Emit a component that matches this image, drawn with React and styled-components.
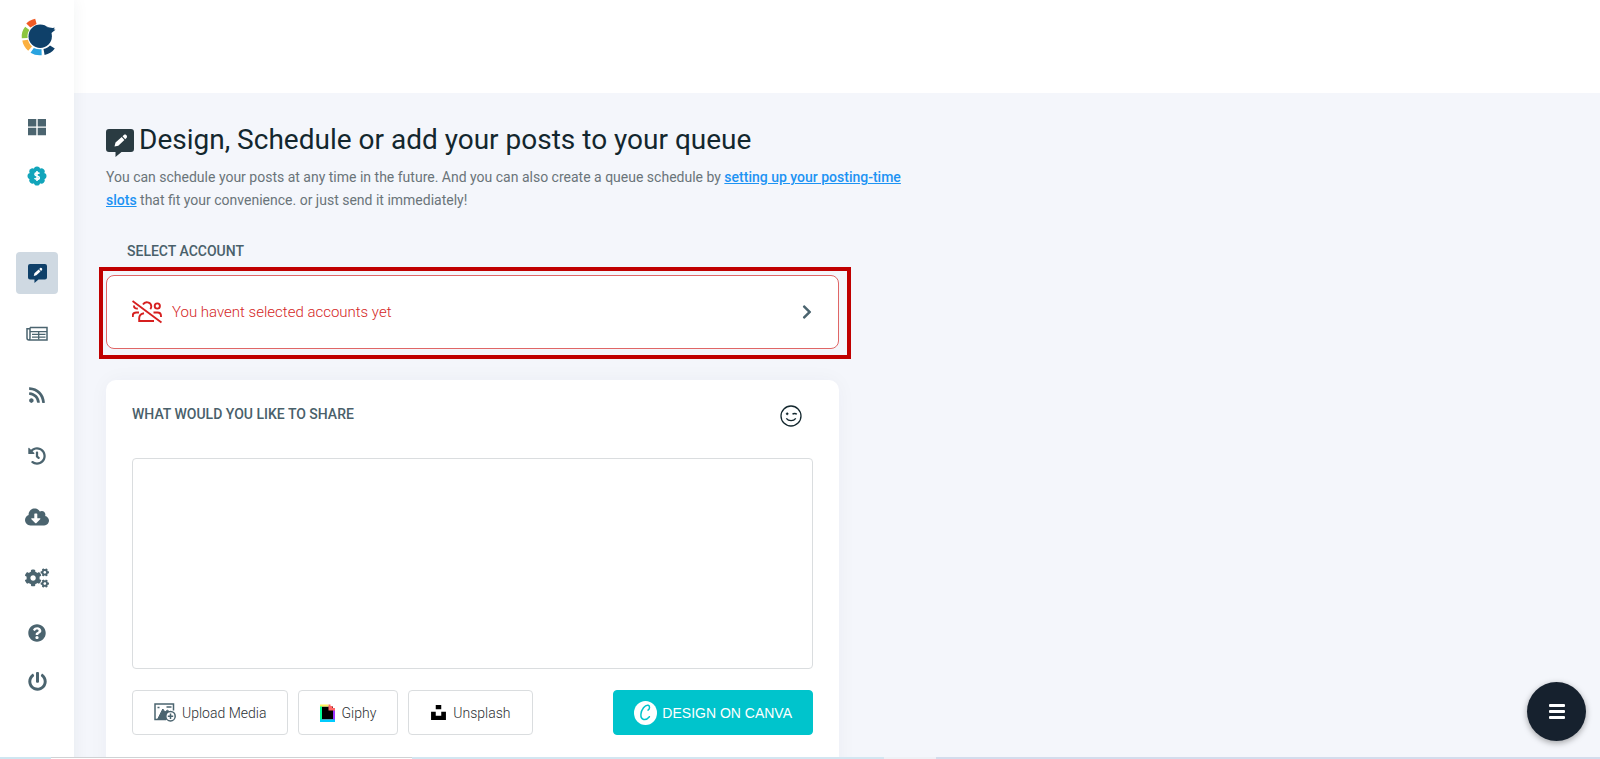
import React from "react";
import styled, { createGlobalStyle, css } from "styled-components";
import {
  FaRss,
  FaHistory,
  FaCloudDownloadAlt,
  FaQuestionCircle,
  FaPowerOff,
  FaUnsplash,
  FaChevronRight,
  FaCogs,
} from "react-icons/fa";

const colors = {
  page: "#f4f6fb",
  icon: "#4b646f",
  navy: "#0f4069",
  heading: "#13272e",
  muted: "#6a7479",
  label: "#49606a",
  link: "#1d93f3",
  red: "#d41f1f",
  frame: "#c00000",
  line: "#dadddf",
  teal: "#00c4cc",
};

const GlobalStyle = createGlobalStyle`
  * {
    box-sizing: border-box;
  }

  body {
    margin: 0;
    background: ${colors.page};
    font-family: Roboto, "Liberation Sans", sans-serif;
    overflow: hidden;
  }

  button,
  textarea {
    font-family: inherit;
    margin: 0;
  }
`;

const Layout = styled.div`
  display: grid;
  grid-template-columns: 74px 1fr;
  height: 100vh;
  overflow: hidden;
`;

const Sidebar = styled.aside`
  display: flex;
  flex-direction: column;
  align-items: center;
  padding-top: 18px;
  background: #fff;
  box-shadow: 0 0 16px rgba(30, 50, 70, 0.06);
  z-index: 1;
`;

const NavGroup = styled.nav`
  display: flex;
  flex-direction: column;
  align-items: center;
  gap: ${(props) => props.$gap}px;
  margin-top: ${(props) => props.$top}px;
`;

const NavLink = styled.a`
  display: flex;
  align-items: center;
  justify-content: center;
  width: 42px;
  height: 42px;
  border-radius: 4px;
  color: ${colors.icon};

  ${(props) =>
    props.$active &&
    css`
      background: #cfd9e2;
      color: ${colors.navy};
    `}
`;

const Main = styled.main`
  min-width: 0;
`;

const TopBar = styled.header`
  height: 93px;
  background: #fff;
`;

const Content = styled.div`
  max-width: 842px;
  padding: 30px 0 0 32px;
`;

const Title = styled.h1`
  display: flex;
  align-items: center;
  gap: 5px;
  margin: 0;
  color: ${colors.heading};
  font-size: 28px;
  font-weight: 400;
  line-height: 34px;

  svg {
    flex: none;
    margin-top: 5px;
    color: #2a3b42;
  }
`;

const Intro = styled.p`
  margin: 9px 0 0;
  color: ${colors.muted};
  font-size: 14px;
  line-height: 23px;

  a {
    color: ${colors.link};
    font-weight: 500;
  }
`;

const Form = styled.form`
  max-width: 733px;
`;

const Label = styled.label`
  display: block;
  color: ${colors.label};
  font-size: 14px;
  font-weight: 500;
  line-height: 20px;
  text-transform: uppercase;
`;

const AccountField = styled.div`
  padding-top: 29px;

  ${Label} {
    padding-left: 21px;
  }
`;

const Highlight = styled.div`
  margin: 6px -12px 0 -7px;
  padding: 4px 8px 6px 3px;
  border: 4px solid ${colors.frame};
`;

const AccountButton = styled.button`
  display: flex;
  align-items: center;
  width: 100%;
  height: 74px;
  padding: 0 23px 0 25px;
  border: 1px solid #e06666;
  border-radius: 8px;
  background: #fff;
  color: ${colors.red};
  font-size: 15px;
  font-weight: 300;
  text-align: left;

  span {
    flex: 1;
    padding-left: 10px;
  }
`;

const Card = styled.section`
  margin-top: 21px;
  padding: 24px 26px;
  border-radius: 10px;
  background: #fff;
  box-shadow: 0 0 20px rgba(30, 50, 70, 0.04);
`;

const CardHead = styled.div`
  display: flex;
  justify-content: space-between;
  height: 54px;
  padding-right: 11px;
`;

const EmojiButton = styled.button`
  width: 22px;
  height: 26px;
  padding: 0;
  border: 0;
  background: none;
  color: #13272e;
`;

const PostInput = styled.textarea`
  display: block;
  width: 100%;
  height: 211px;
  padding: 12px;
  border: 1px solid ${colors.line};
  border-radius: 4px;
  resize: none;
`;

const Actions = styled.div`
  display: flex;
  gap: 10px;
  padding: 21px 0 60px;
`;

const MediaButton = styled.button`
  display: flex;
  align-items: center;
  justify-content: center;
  gap: 6px;
  height: 45px;
  padding: 0 21px;
  border: 1px solid ${colors.line};
  border-radius: 4px;
  background: #fff;
  color: #2b2f33;
  font-size: 14px;
  font-weight: 300;
  white-space: nowrap;
`;

const CanvaButton = styled(MediaButton)`
  gap: 5px;
  margin-left: auto;
  padding: 0 20px;
  border-color: ${colors.teal};
  background: ${colors.teal};
  color: #fff;
  font-family: "Liberation Sans", Arial, sans-serif;
`;

const MenuButton = styled.button`
  position: fixed;
  right: 14px;
  bottom: 18px;
  display: flex;
  align-items: center;
  justify-content: center;
  width: 59px;
  height: 59px;
  padding: 0;
  border: 0;
  border-radius: 50%;
  background: #16212e;
  color: #fff;
  box-shadow: 0 2px 6px rgba(0, 0, 0, 0.35);
`;

const BottomEdge = styled.div`
  position: fixed;
  right: 0;
  bottom: 0;
  left: 0;
  display: flex;
  height: 2px;
  z-index: 2;
`;

const EdgePart = styled.span`
  flex: ${(props) => props.$size};
  border-top: 1px solid ${(props) => props.$color};
  background: ${(props) => props.$fill || props.$color};
`;

function Logo() {
  return (
    <svg width="40" height="38" viewBox="-4 0 40 38" role="img" aria-label="Home">
      <circle cx="19.200" cy="18.300" r="11.700" fill="#0f4069" />
      <path d="M26 8.500c2.200 1.300 4.700 1.700 8 1.300l-1.400 1.400 1.900.6-4.700 3.700z" fill="#0f4069" />
      <path d="M14.200.7 15.600 5.900 9.400 9.400 5.300 5.400C7.700 2.900 10.700 1.300 14.200.7z" fill="#f15a24" />
      <path d="M4.200 8.800 8.400 12C6.800 14.400 6.200 17 6.600 20L.8 20.200C.3 15.900 1.500 12.100 4.200 8.800z" fill="#8cc63f" />
      <path d="M1.300 22.600 7 21.700C7.700 24.500 9 26.600 11 28.400L7.200 32.700C3.900 30 2 26.600 1.300 22.600z" fill="#fbb040" />
      <path d="M12.800 29.900C15.300 31.100 17.800 31.500 20.500 31.200L20.700 37.200C16.600 37.600 13 36.900 9.500 34.800z" fill="#29a3e0" />
      <path d="M22.500 31C25.200 30.400 27.200 29.300 29 27.500L33.800 30.500C31.100 34 27.900 36.200 23.600 36.900z" fill="#0f4069" />
    </svg>
  );
}

function GridIcon() {
  return (
    <svg width="20" height="18" viewBox="0 0 20 18" fill="currentColor">
      <path d="M1 1h8.300v7.500H1zM10.700 1H19v7.500h-8.300zM1 9.800h8.300v7.500H1zM10.700 9.800H19v7.500h-8.300z" />
    </svg>
  );
}

function DollarBadge() {
  const petals = [0, 45, 90, 135, 180, 225, 270, 315];
  return (
    <svg width="20" height="20" viewBox="0 0 20 20">
      <g fill="#12a5bb">
        <circle cx="10" cy="10" r="7.800" />
        {petals.map((angle) => (
          <circle key={angle} cx="10" cy="3.600" r="3.100" transform={`rotate(${angle} 10 10)`} />
        ))}
      </g>
      <path
        d="M12.400 7.700C11.900 6.700 8 6.300 7.900 8.300c0 2 4.400 1.200 4.400 3.400 0 2-4 1.900-4.700.5M10 5v10"
        fill="none"
        stroke="#fff"
        strokeWidth="1.600"
      />
    </svg>
  );
}

function PostIcon({ size }) {
  return (
    <svg width={size} height={size} viewBox="0 0 28 28">
      <path d="M3 0h22a3 3 0 0 1 3 3v17a3 3 0 0 1-3 3H15.500L9.500 28v-5H3a3 3 0 0 1-3-3V3a3 3 0 0 1 3-3z" fill="currentColor" />
      <path d="M8.500 17.500 9.500 13.500 15.700 8 18.400 11 12.300 16.700zM16.500 7.300l1.600-1.500c1.600-1 3.800 1.300 2.600 2.900l-1.500 1.500z" fill="#fff" />
    </svg>
  );
}

function ArticlesIcon() {
  return (
    <svg width="22" height="16" viewBox="0 0 22 16" fill="none" stroke="currentColor" strokeWidth="1.500">
      <path d="M4 1.500h17v12.500H3c-1.300 0-2-.7-2-2V2.800h3M4 1.500V12c0 1.200-.4 2-1.200 2" />
      <path d="M4 5.700h17M6 8.300h13.500M6 11.200h13.500M12.700 6v7.500" strokeWidth="1.300" />
    </svg>
  );
}

function NoUsersIcon() {
  return (
    <svg width="30" height="24" viewBox="0 0 30 24" fill="none" stroke="#d61f1f" strokeWidth="1.900">
      <path d="M.5 1 29.500 22.500" />
      <path d="M11 4.500c2-3.500 8-2.600 8.300 1.700 0 1.300-.3 2.200-1 3M2 5.500c-.2 2.300 1.500 3.400 3.800 3M.8 17v-1.500c0-2 1.300-3 3.500-3H7" />
      <circle cx="25.300" cy="6" r="2.600" />
      <path d="M21.500 12.500h4c2.300 0 3.500 1.200 3.500 3.500v1M12 13.200c-3.300.5-4.800 2.200-4.800 5V21H22" />
    </svg>
  );
}

function WinkIcon() {
  return (
    <svg width="22" height="22" viewBox="0 0 22 22" fill="none" stroke="currentColor" strokeWidth="1.300">
      <circle cx="11" cy="11" r="10" />
      <circle cx="7.200" cy="8.800" r="1" fill="currentColor" strokeWidth=".6" />
      <path d="M12.500 9.300c1-1.100 3.200-1.100 4.300 0M6.300 13.400c2.300 3 7.200 3 9.500 0" />
    </svg>
  );
}

function MediaIcon() {
  return (
    <svg width="22" height="19" viewBox="0 0 22 19" fill="none" stroke={colors.icon} strokeWidth="1.500">
      <path d="M12 16.500H1V1h18.500v6.500" />
      <path d="M3.500 16.500 8.800 6l5 7-1.500 3.500z" fill={colors.icon} strokeWidth="1" />
      <path d="M11 9l2.300-1.800L16 9l-3 3z" fill={colors.icon} strokeWidth="1" />
      <path d="M3.500 4.500h2M12.500 4h5" />
      <circle cx="16.500" cy="13.200" r="4.700" fill="#fff" />
      <path d="M16.500 10.500v5.400M13.800 13.200h5.400" />
    </svg>
  );
}

function GiphyIcon() {
  return (
    <svg width="15" height="18" viewBox="0 0 15 18">
      <path d="M2 2.500h11v13H2z" fill="#000" />
      <path d="M0 1.500h2v15H0z" fill="#00ff99" />
      <path d="M13 6h2v10.500h-2z" fill="#9933ff" />
      <path d="M0 15.500h15V18H0z" fill="#00ccff" />
      <path d="M0 .5h8.500v2H0z" fill="#fff35c" />
      <path d="M8.500.5h2V2h2v2H15v2.500H8.500z" fill="#ff6666" />
    </svg>
  );
}

function CanvaIcon() {
  return (
    <svg width="23" height="24" viewBox="0 0 23 24">
      <ellipse cx="11.500" cy="12" rx="11.500" ry="12" fill="#fff" />
      <path
        d="M14 9.200c1.900-1.300 2.100-4.400.2-4.900-3.200-.6-6.900 4.300-7.300 9-.4 6 4.900 6.900 8.500 2.400"
        fill="none"
        stroke={colors.teal}
        strokeWidth="1.500"
        strokeLinecap="round"
      />
    </svg>
  );
}

function MenuIcon() {
  return (
    <svg width="16" height="15" viewBox="0 0 16 15" fill="currentColor">
      <rect width="16" height="3" rx="1" />
      <rect y="6" width="16" height="3" rx="1" />
      <rect y="12" width="16" height="3" rx="1" />
    </svg>
  );
}

const topLinks = [
  { name: "Dashboard", icon: <GridIcon /> },
  { name: "Billing", icon: <DollarBadge /> },
];

const toolLinks = [
  { name: "Publish", icon: <PostIcon size={19} />, active: true },
  { name: "Articles", icon: <ArticlesIcon /> },
  { name: "Feeds", icon: <FaRss size={18} /> },
  { name: "History", icon: <FaHistory size={18} /> },
  { name: "Downloads", icon: <FaCloudDownloadAlt size={24} /> },
  { name: "Settings", icon: <FaCogs size={24} /> },
];

const accountLinks = [
  { name: "Help", icon: <FaQuestionCircle size={18} /> },
  { name: "Log out", icon: <FaPowerOff size={19} /> },
];

const edgeParts = [
  { size: 51, color: "#cfe6f1" },
  { size: 361, color: "#cfd2d4", fill: "#fff" },
  { size: 472, color: "#d3e6f1" },
  { size: 52, color: "#eef1f6" },
  { size: 664, color: "#d3dcec" },
];

function NavItems({ links, gap, top }) {
  return (
    <NavGroup $gap={gap} $top={top}>
      {links.map((link) => (
        <NavLink key={link.name} href="#" aria-label={link.name} $active={link.active}>
          {link.icon}
        </NavLink>
      ))}
    </NavGroup>
  );
}

export default function App() {
  return (
    <>
      <GlobalStyle />
      <Layout>
        <Sidebar>
          <Logo />
          <NavItems links={topLinks} gap={7} top={50} />
          <NavItems links={toolLinks} gap={19} top={55} />
          <NavItems links={accountLinks} gap={6} top={13} />
        </Sidebar>

        <Main>
          <TopBar />
          <Content>
            <Title>
              <PostIcon size={28} />
              Design, Schedule or add your posts to your queue
            </Title>
            <Intro>
              You can schedule your posts at any time in the future. And you can also create a queue
              schedule by <a href="#">setting up your posting-time slots</a> that fit your
              convenience. or just send it immediately!
            </Intro>

            <Form>
              <AccountField>
                <Label htmlFor="account">Select account</Label>
                <Highlight>
                  <AccountButton type="button" id="account">
                    <NoUsersIcon />
                    <span>You havent selected accounts yet</span>
                    <FaChevronRight size={16} color={colors.icon} />
                  </AccountButton>
                </Highlight>
              </AccountField>

              <Card>
                <CardHead>
                  <Label htmlFor="post">What would you like to share</Label>
                  <EmojiButton type="button" aria-label="Add emoji">
                    <WinkIcon />
                  </EmojiButton>
                </CardHead>
                <PostInput id="post" />
                <Actions>
                  <MediaButton type="button">
                    <MediaIcon />
                    Upload Media
                  </MediaButton>
                  <MediaButton type="button">
                    <GiphyIcon />
                    Giphy
                  </MediaButton>
                  <MediaButton type="button">
                    <FaUnsplash size={17} color="#000" />
                    Unsplash
                  </MediaButton>
                  <CanvaButton type="button">
                    <CanvaIcon />
                    DESIGN ON CANVA
                  </CanvaButton>
                </Actions>
              </Card>
            </Form>
          </Content>
        </Main>
      </Layout>

      <MenuButton type="button" aria-label="Menu">
        <MenuIcon />
      </MenuButton>

      <BottomEdge>
        {edgeParts.map((part, index) => (
          <EdgePart key={index} $size={part.size} $color={part.color} $fill={part.fill} />
        ))}
      </BottomEdge>
    </>
  );
}
